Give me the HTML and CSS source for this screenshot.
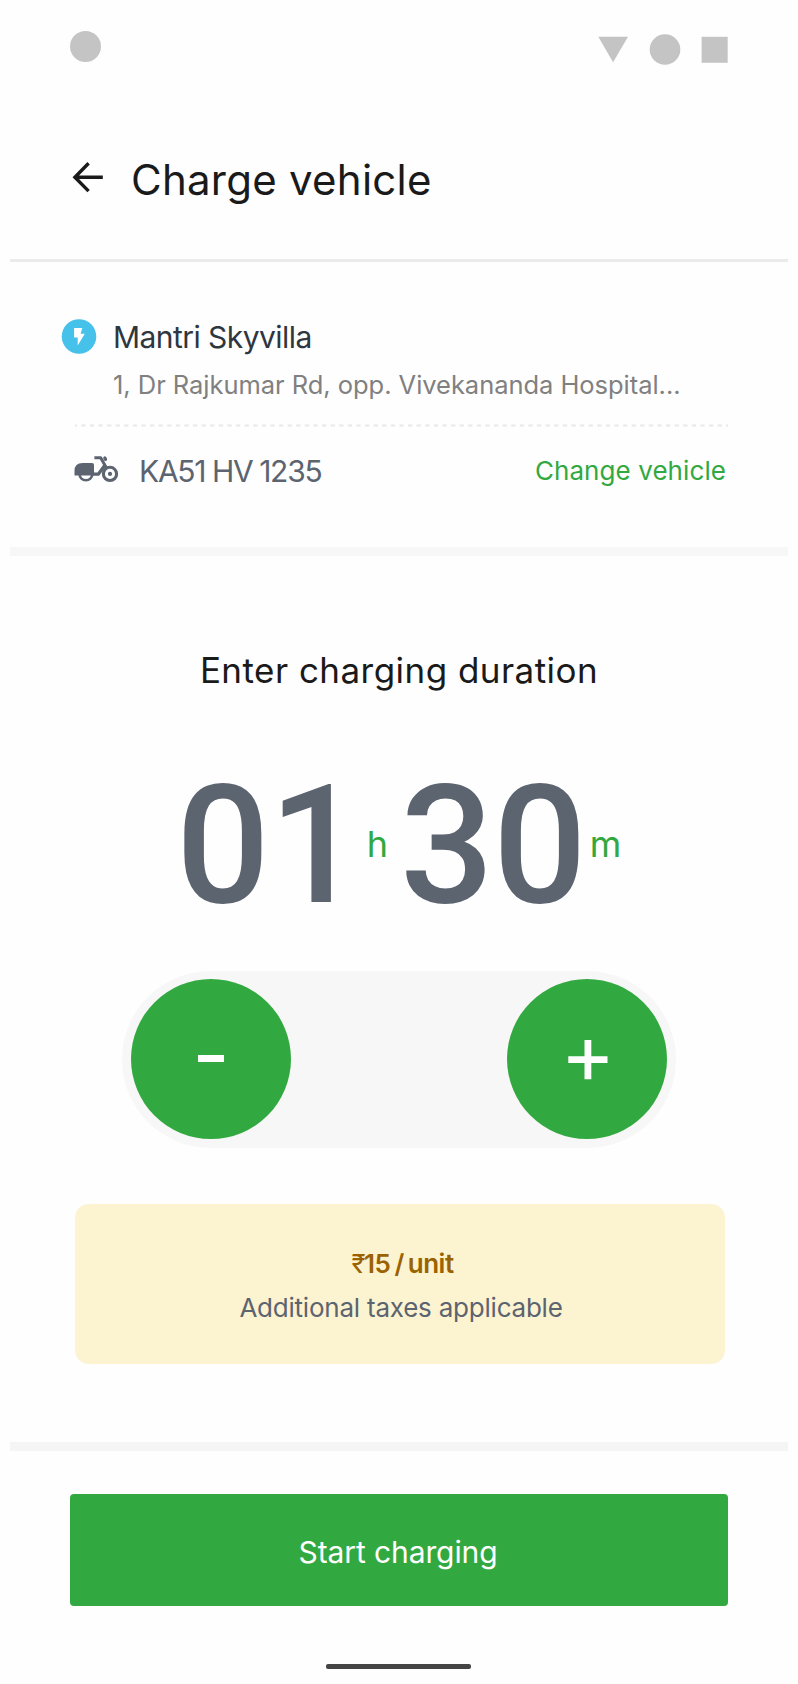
FILE: index.html
```html
<!DOCTYPE html>
<html lang="en">
<head>
<meta charset="utf-8">
<title>Charge vehicle</title>
<link rel="stylesheet" href="styles.css">
</head>
<body>
<main class="screen">
  <div class="status">
    <span class="dot"></span>
    <svg class="status-icons" width="130" height="31" viewBox="0 0 130 31" fill="#c4c4c4">
      <path d="M.3 2.8H30L15.1 28.3z"/><circle cx="67" cy="15.5" r="15.3"/><path d="M103.6 2.8h26.1v26h-26.1z"/>
    </svg>
  </div>
  <header class="header">
    <svg class="back" width="32" height="32" viewBox="0 0 32 32" fill="none" stroke="#1a1a1a" stroke-width="3.4">
      <path d="M31.8 16.2H4.200M17.600 2.300L3.900 16.2l13.700 13.900"/>
    </svg>
    <h1 class="title">Charge vehicle</h1>
  </header>
  <section class="station">
    <div class="station-row">
      <svg class="badge" width="41" height="41" viewBox="0 0 41 41">
        <circle cx="20" cy="19.5" r="17.3" fill="#45c1ea"/>
        <path d="M15.1 11h8.2l-1.7 5.8h4.2L18.700 28.5v-7.9h-3.6z" fill="#fff"/>
      </svg>
      <div class="place">
        <h2 class="name">Mantri Skyvilla</h2>
        <p class="address">1, Dr Rajkumar Rd, opp. Vivekananda Hospital...</p>
      </div>
    </div>
    <svg class="dashes" width="654" height="3" viewBox="0 0 654 3">
      <path d="M0 1.5H653" stroke="#e8e8e8" stroke-width="2.2" stroke-dasharray="4.3 4.3" stroke-dashoffset="2.4"/>
    </svg>
    <div class="vehicle">
      <svg class="scooter" width="45" height="28" viewBox="0 0 45 28" fill="none" stroke="#5c6470">
        <path d="M.5 19.500v-4.500Q.5 7 8.500 7H18q2 0 2 2v10.500z" fill="#5c6470" stroke="none"/>
        <path d="M5.600 18.500a6.300 5.800 0 0 0 12.600 0" stroke-width="2.600"/>
        <path d="M19 18.200h5.300L31 9" stroke-width="3.200" stroke-linejoin="round"/>
        <path d="M20.400 1.700h6.300l5.500 9.800" stroke-width="3" stroke-linejoin="round"/>
        <ellipse cx="31.200" cy="2.700" rx="1.700" ry="2.400" transform="rotate(-25 31.200 2.700)" fill="#5c6470" stroke="none"/>
        <circle cx="36" cy="17.900" r="6.600" fill="#fefefe" stroke-width="3.100"/>
        <circle cx="36" cy="17.900" r="2.100" fill="#5c6470" stroke="none"/>
      </svg>
      <span class="plate">KA51 HV 1235</span>
      <a class="change">Change vehicle</a>
    </div>
  </section>
  <section class="duration">
    <h2 class="prompt">Enter charging duration</h2>
    <div class="time">
      <span class="digits">01</span><span class="unit hours">h</span><span class="digits">30</span><span class="unit minutes">m</span>
    </div>
    <div class="stepper">
      <button class="step" aria-label="Decrease">
        <svg width="160" height="160" viewBox="0 0 160 160" fill="#fff"><path d="M67 76h26v7H67z"/></svg>
      </button>
      <button class="step" aria-label="Increase">
        <svg width="160" height="160" viewBox="0 0 160 160" fill="#fff"><path d="M61.300 77.200h16.200V61h6.800v16.200h16.200v6.800H84.300v16.200h-6.800V84H61.300z"/></svg>
      </button>
    </div>
    <div class="price">
      <p class="rate"><span class="currency">₹</span>15 / unit</p>
      <p class="tax">Additional taxes applicable</p>
    </div>
  </section>
  <footer class="footer">
    <button class="start">Start charging</button>
    <span class="home"></span>
  </footer>
</main>
</body>
</html>
```

FILE: styles.css
```css
* { box-sizing: border-box; }
body { margin: 0; background: #fefefe; font-family: Inter, "Liberation Sans", sans-serif; }
h1, h2, p { margin: 0; font-weight: 400; white-space: nowrap; }
button { border: 0; padding: 0; font-family: inherit; }
svg { display: block; flex: none; }

.screen { width: 778px; height: 1684px; margin: 0 auto; }

.status { display: flex; justify-content: space-between; align-items: flex-start; height: 92px; padding: 31px 60px 0; }
.dot { width: 31px; height: 31px; border-radius: 50%; background: #c4c4c4; }
.status-icons { margin-top: 3px; }

.header { display: flex; align-items: flex-start; height: 170px; padding: 69px 61px 0; border-bottom: 3px solid #ebebeb; }
.back { margin-right: 28px; }
.title { margin-top: -6px; font-size: 42px; line-height: 50px; letter-spacing: .25px; color: #1a1a1a; }

.station { height: 294px; padding-top: 56px; border-bottom: 9px solid #f7f7f7; }
.station-row { display: flex; padding-left: 49px; }
.badge { margin: -1px 13px 0 0; }
.name { margin-top: -1px; font-size: 30px; line-height: 40px; letter-spacing: -.55px; color: #2f3640; }
.address { margin-top: 11px; font-size: 25.500px; line-height: 34px; letter-spacing: -.04px; color: #808080; }
.dashes { margin: 22px 0 0 65px; }
.vehicle { display: flex; align-items: center; height: 48px; margin-top: 20px; padding: 0 62px 0 64px; color: #5c6470; }
.scooter { margin: -2px 20px 0 0; }
.plate { font-size: 30px; line-height: 40px; letter-spacing: -1.25px; word-spacing: -.5px; }
.change { margin: 0 0 0 auto; font-size: 26px; line-height: 34px; letter-spacing: .08px; color: #32a940; }

.duration { display: flex; flex-direction: column; align-items: center; height: 886px; padding-top: 92px; }
.prompt { font-size: 35px; line-height: 44px; letter-spacing: .46px; color: #1a1a1a; }
.time { display: flex; align-items: center; width: 450px; height: 160px; margin-top: 72px; padding-left: 2px; }
.digits { margin-top: 3px; font: 500 165px/160px Roboto, sans-serif; letter-spacing: -.9px; color: #5c6470; }
.unit { font-size: 36px; line-height: 40px; color: #32a940; }
.hours { margin: 0 12px 0 5px; }
.minutes { margin-left: 4px; }
.stepper { display: flex; justify-content: space-between; flex: none; width: 554px; height: 177px; margin-top: 47px; padding: 8px 9px; border-radius: 89px; background: #f7f7f7; }
.step { width: 160px; height: 160px; border-radius: 50%; background: #32a940; }
.price { flex: none; width: 650px; height: 160px; margin: 56px 0 0 2px; padding-top: 38px; border-radius: 14px; background: #fcf3d0; text-align: center; font-size: 26px; line-height: 44px; }
.rate { padding-left: 5px; font-weight: 600; letter-spacing: -.5px; word-spacing: -2px; color: #9a6200; }
.currency { margin-right: -1px; font-weight: 400; }
.tax { padding-left: 2px; letter-spacing: -.22px; color: #5c6470; }

.footer { display: flex; flex-direction: column; align-items: center; height: 242px; padding-top: 43px; border-top: 9px solid #f5f5f5; }
.start { width: 658px; height: 112px; padding: 4px 2px 0 0; border-radius: 4px; background: #32a940; color: #fff; font-size: 30px; line-height: 40px; letter-spacing: -.1px; }
.home { width: 145px; height: 5px; margin: 58px 2px 0 0; border-radius: 2px; background: #444; }
```
